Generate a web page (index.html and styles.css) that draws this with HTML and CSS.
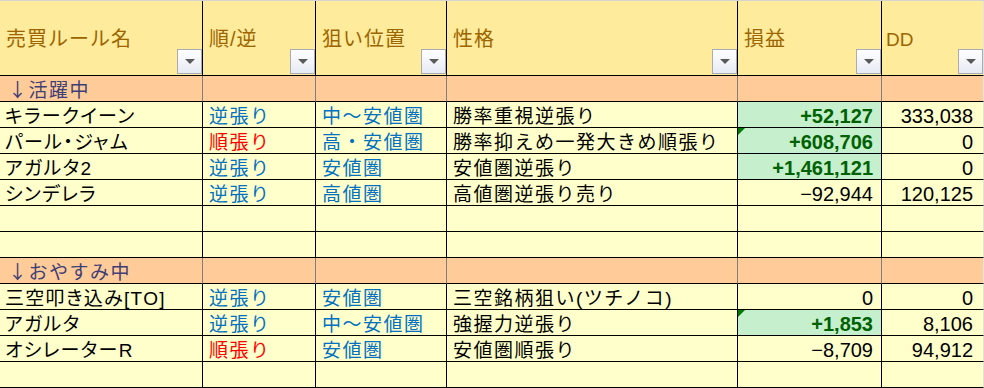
FILE: index.html
```html
<!DOCTYPE html>
<html lang="ja">
<head>
<meta charset="utf-8">
<title>売買ルール</title>
<link rel="stylesheet" href="styles.css">
</head>
<body>
<div class="sheet">
  <div class="grid">
    <div class="c hd"><span class="lbl">売買ルール名</span><span class="filter"></span></div>
    <div class="c hd"><span class="lbl">順/逆</span><span class="filter"></span></div>
    <div class="c hd"><span class="lbl">狙い位置</span><span class="filter"></span></div>
    <div class="c hd"><span class="lbl">性格</span><span class="filter"></span></div>
    <div class="c hd"><span class="lbl">損益</span><span class="filter"></span></div>
    <div class="c hd last"><span class="lbl latin">DD</span><span class="filter"></span></div>

    <div class="c grp">↓活躍中</div><div class="c grp"></div><div class="c grp"></div><div class="c grp"></div><div class="c grp"></div><div class="c grp last"></div>

    <div class="c name">キラークイーン</div>
    <div class="c blue">逆張り</div>
    <div class="c blue">中〜安値圏</div>
    <div class="c">勝率重視逆張り</div>
    <div class="c num good">+52,127</div>
    <div class="c num dd last">333,038</div>

    <div class="c name">パール・ジャム</div>
    <div class="c red">順張り</div>
    <div class="c blue">高・安値圏</div>
    <div class="c">勝率抑えめ一発大きめ順張り</div>
    <div class="c num good flag">+608,706</div>
    <div class="c num dd last">0</div>

    <div class="c name">アガルタ2</div>
    <div class="c blue">逆張り</div>
    <div class="c blue">安値圏</div>
    <div class="c">安値圏逆張り</div>
    <div class="c num good">+1,461,121</div>
    <div class="c num dd last">0</div>

    <div class="c name">シンデレラ</div>
    <div class="c blue">逆張り</div>
    <div class="c blue">高値圏</div>
    <div class="c">高値圏逆張り売り</div>
    <div class="c num">−92,944</div>
    <div class="c num dd last">120,125</div>

    <div class="c"></div><div class="c"></div><div class="c"></div><div class="c"></div><div class="c"></div><div class="c last"></div>
    <div class="c"></div><div class="c"></div><div class="c"></div><div class="c"></div><div class="c"></div><div class="c last"></div>

    <div class="c grp">↓おやすみ中</div><div class="c grp"></div><div class="c grp"></div><div class="c grp"></div><div class="c grp"></div><div class="c grp last"></div>

    <div class="c name">三空叩き込み[TO]</div>
    <div class="c blue">逆張り</div>
    <div class="c blue">安値圏</div>
    <div class="c">三空銘柄狙い(ツチノコ)</div>
    <div class="c num">0</div>
    <div class="c num dd last">0</div>

    <div class="c name">アガルタ</div>
    <div class="c blue">逆張り</div>
    <div class="c blue">中〜安値圏</div>
    <div class="c">強握力逆張り</div>
    <div class="c num good flag">+1,853</div>
    <div class="c num dd last">8,106</div>

    <div class="c name">オシレーターR</div>
    <div class="c red">順張り</div>
    <div class="c blue">安値圏</div>
    <div class="c">安値圏順張り</div>
    <div class="c num">−8,709</div>
    <div class="c num dd last">94,912</div>

    <div class="c"></div><div class="c"></div><div class="c"></div><div class="c"></div><div class="c"></div><div class="c last"></div>
  </div>
</div>
</body>
</html>
```
FILE: styles.css
```css
html, body {
  margin: 0;
  padding: 0;
  background: #ffffff;
}

.sheet {
  width: 984px;
  height: 387px;
  border-top: 1px solid #d4d4d4;
  overflow: hidden;
}

.grid {
  display: grid;
  grid-template-columns: 203px 113px 131px 291px 144px 102px;
  grid-template-rows: 75px;
  grid-auto-rows: 26px;
  font-family: "Liberation Sans", "Noto Sans CJK JP", sans-serif;
}

.c {
  position: relative;
  box-sizing: border-box;
  border-right: 1px solid #000;
  border-bottom: 1px solid #000;
  background: #ffffcc;
  color: #000;
  font-size: 19px;
  line-height: 25px;
  padding: 2px 2px 0 6px;
  letter-spacing: 1.5px;
  white-space: nowrap;
}

.c.last {
  border-right-color: #e2e2e2;
}

.name {
  padding-left: 5px;
  letter-spacing: 1.3px;
  font-feature-settings: "palt";
}

/* header */
.hd {
  background: #ffeb9c;
  color: #9c6500;
  font-size: 20px;
  letter-spacing: 1px;
  display: flex;
  justify-content: space-between;
  padding: 26px 0 1px 6px;
}

.lbl {
  align-self: flex-start;
  line-height: 25px;
}

.lbl.latin {
  margin-left: -2px;
  font-size: 19px;
  letter-spacing: 0;
}

.filter {
  align-self: flex-end;
  flex: none;
  width: 25px;
  height: 25px;
  box-sizing: border-box;
  border: 1px solid #a9acb3;
  background: linear-gradient(#ffffff, #e6eaf3);
  display: flex;
  align-items: center;
  justify-content: center;
}

.filter::after {
  content: "";
  width: 0;
  height: 0;
  margin-left: 1px;
  border-left: 5px solid transparent;
  border-right: 5px solid transparent;
  border-top: 5px solid #5a5a5a;
}

/* group rows */
.grp {
  background: #ffcc99;
  color: #3f3f76;
  border-right-color: #7f7f7f;
  font-family: "Noto Sans CJK JP", sans-serif;
  line-height: 25px;
  padding: 0 2px 0 8px;
}

/* text colours */
.blue {
  color: #0070c0;
}

.red {
  color: #ff0000;
}

/* numbers */
.num {
  font-size: 20px;
  letter-spacing: 0;
  text-align: right;
  padding-right: 8px;
}

.num.dd {
  padding-right: 10px;
}

.good {
  background: #c6efce;
  color: #006100;
  font-weight: bold;
}

.flag::before {
  content: "";
  position: absolute;
  left: 0;
  top: 0;
  width: 0;
  height: 0;
  border-top: 7px solid #007a00;
  border-right: 7px solid transparent;
}
```
